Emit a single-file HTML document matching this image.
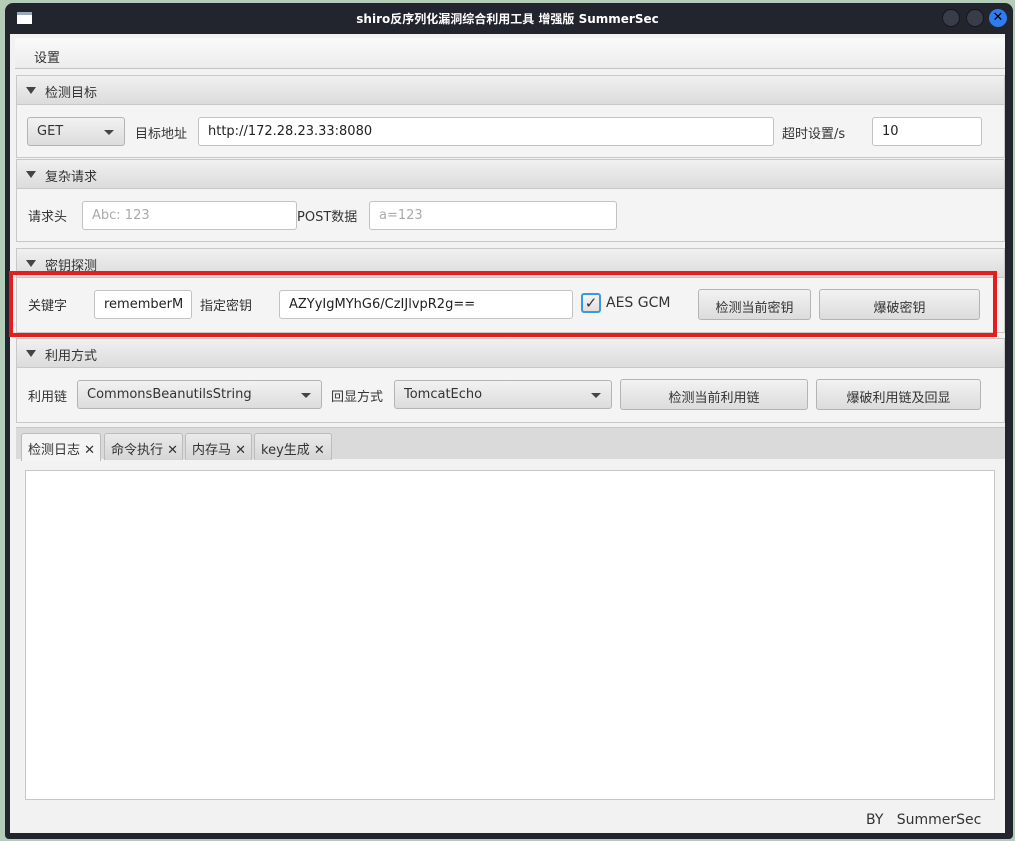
<!DOCTYPE html>
<html><head><meta charset="utf-8"><style>
*{box-sizing:border-box;margin:0;padding:0}
body{width:1015px;height:841px;background:#b3cdb9;position:relative;overflow:hidden;font-family:"DejaVu Sans","Liberation Sans","Noto Sans CJK SC",sans-serif;font-size:13px;color:#333}
.a{position:absolute}
.win{left:5px;top:3px;width:1008px;height:836px;background:#22252e;border-radius:8px 8px 4px 4px}
.content{left:10px;top:34px;width:995px;height:799px;background:#f2f2f2}
.title{left:0;top:10px;width:1015px;text-align:center;color:#fff;font-weight:bold;font-size:12px}
.hdr{background:linear-gradient(#f0f0f0,#dcdcdc);border:1px solid #c8c8c8;height:30px}
.hdr span{position:absolute;left:28px;top:6px;font-size:13px;color:#333}
.hdr i{position:absolute;left:9px;top:11px;width:0;height:0;border-left:5px solid transparent;border-right:5px solid transparent;border-top:7px solid #444}
.body{border:1px solid #c8c8c8;border-top:none;background:#f4f4f4}
.tf{background:#fff;border:1px solid #c2c2c2;border-radius:3px;height:29px;padding:6px 9px 0;white-space:nowrap;overflow:hidden;color:#222}
.ph{color:#aaa}
.btn{background:linear-gradient(#f2f2f2,#dcdcdc);border:1px solid #b4b4b4;border-radius:3px;height:31px;text-align:center;padding-top:7px;color:#333}
.cb{background:linear-gradient(#f2f2f2,#dcdcdc);border:1px solid #b4b4b4;border-radius:3px;height:29px;padding:6px 9px 0;color:#333}
.cb i{position:absolute;right:10px;top:12px;border-left:5px solid transparent;border-right:5px solid transparent;border-top:5px solid #444}
.lb{color:#333}
.tab{top:433px;height:27px;background:linear-gradient(#eaeaea,#d6d6d6);border:1px solid #bcbcbc;border-bottom:none;border-radius:3px 3px 0 0;padding:5px 6px;color:#333;white-space:nowrap}
</style></head><body>
<div class="a win"></div>
<div class="a" style="left:17px;top:12px;width:15px;height:12px;background:#fff;border-top:3px solid #9ab;"></div>
<div class="a title">shiro反序列化漏洞综合利用工具 增强版 SummerSec</div>
<div class="a" style="left:942px;top:9px;width:18px;height:18px;border-radius:50%;background:#393d4a;border:1px solid #15171c"></div>
<div class="a" style="left:966px;top:9px;width:18px;height:18px;border-radius:50%;background:#393d4a;border:1px solid #15171c"></div>
<div class="a" style="left:989px;top:9px;width:18px;height:18px;border-radius:50%;background:#2f7cf0;color:#000;font-weight:bold;font-size:13px;text-align:center;line-height:18px">✕</div>
<div class="a content"></div>
<div class="a" style="left:15px;top:38px;width:990px;height:31px;background:linear-gradient(#fafafa,#ececec);border-bottom:1px solid #c4c4c4"></div>
<div class="a" style="left:34px;top:47px">设置</div>

<div class="a hdr" style="left:16px;top:75px;width:989px"><i></i><span>检测目标</span></div>
<div class="a body" style="left:16px;top:105px;width:989px;height:53px"></div>
<div class="a cb" style="left:27px;top:117px;width:98px">GET<i></i></div>
<div class="a lb" style="left:135px;top:123px">目标地址</div>
<div class="a tf" style="left:198px;top:117px;width:576px">http://172.28.23.33:8080</div>
<div class="a lb" style="left:782px;top:123px">超时设置/s</div>
<div class="a tf" style="left:872px;top:117px;width:110px">10</div>

<div class="a hdr" style="left:16px;top:159px;width:989px"><i></i><span>复杂请求</span></div>
<div class="a body" style="left:16px;top:189px;width:989px;height:53px"></div>
<div class="a lb" style="left:28px;top:206px">请求头</div>
<div class="a tf ph" style="left:82px;top:201px;width:215px">Abc: 123</div>
<div class="a lb" style="left:297px;top:206px">POST数据</div>
<div class="a tf ph" style="left:369px;top:201px;width:248px">a=123</div>

<div class="a hdr" style="left:16px;top:248px;width:989px"><i></i><span>密钥探测</span></div>
<div class="a body" style="left:16px;top:278px;width:989px;height:55px"></div>
<div class="a lb" style="left:28px;top:295px">关键字</div>
<div class="a tf" style="left:94px;top:290px;width:98px">rememberM</div>
<div class="a lb" style="left:200px;top:295px">指定密钥</div>
<div class="a tf" style="left:279px;top:290px;width:294px">AZYyIgMYhG6/CzIJlvpR2g==</div>
<div class="a" style="left:581px;top:293px;width:20px;height:20px;border:2px solid #3a9ad9;border-radius:3px;background:linear-gradient(#f4f4f4,#dedede);text-align:center;font-size:15px;line-height:16px;color:#333">✓</div>
<div class="a" style="left:606px;top:295px;font-size:14px">AES GCM</div>
<div class="a btn" style="left:698px;top:289px;width:113px">检测当前密钥</div>
<div class="a btn" style="left:819px;top:289px;width:161px">爆破密钥</div>
<div class="a" style="left:9px;top:271px;width:988px;height:66px;border:4px solid #e41e1e"></div>

<div class="a hdr" style="left:16px;top:338px;width:989px"><i></i><span>利用方式</span></div>
<div class="a body" style="left:16px;top:368px;width:989px;height:55px"></div>
<div class="a lb" style="left:28px;top:386px">利用链</div>
<div class="a cb" style="left:77px;top:380px;width:245px">CommonsBeanutilsString<i></i></div>
<div class="a lb" style="left:331px;top:386px">回显方式</div>
<div class="a cb" style="left:394px;top:380px;width:218px">TomcatEcho<i></i></div>
<div class="a btn" style="left:620px;top:379px;width:188px">检测当前利用链</div>
<div class="a btn" style="left:816px;top:379px;width:165px">爆破利用链及回显</div>

<div class="a" style="left:16px;top:427px;width:989px;height:33px;background:#dadada;border-top:1px solid #c8c8c8"></div>
<div class="a" style="left:16px;top:459px;width:989px;height:374px;background:#f2f2f2"></div>
<div class="a tab" style="left:21px;width:80px;background:#f4f4f4;height:28px">检测日志 ✕</div>
<div class="a tab" style="left:104px;width:79px">命令执行 ✕</div>
<div class="a tab" style="left:185px;width:67px">内存马 ✕</div>
<div class="a tab" style="left:254px;width:78px">key生成 ✕</div>
<div class="a" style="left:25px;top:470px;width:970px;height:330px;background:#fff;border:1px solid #c6c6c6"></div>
<div class="a" style="left:866px;top:812px;font-size:14px">BY&nbsp;&nbsp; SummerSec</div>
</body></html>
